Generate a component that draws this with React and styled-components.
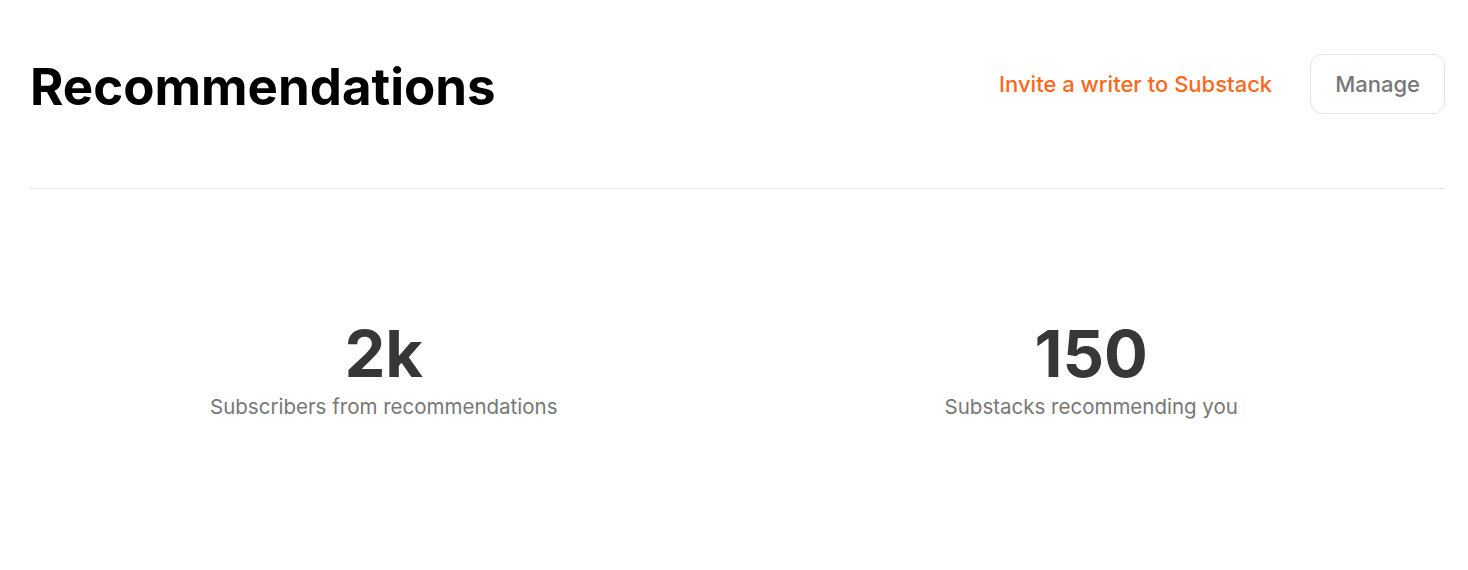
import React from 'react';
import styled, { createGlobalStyle } from 'styled-components';

const GlobalStyle = createGlobalStyle`
    body {
        margin: 0;
        background: #ffffff;
        font-family: Inter, "Noto Sans", sans-serif;
        -webkit-font-smoothing: antialiased;
    }
`;

const Page = styled.div`
    display: flex;
    flex-direction: column;
    padding: 0 23px 0 30px;
`;

const Header = styled.div`
    display: flex;
    flex-direction: row;
    align-items: center;
    justify-content: space-between;
    height: 167px;
    padding-bottom: 21px;
    border-bottom: 1px solid #e6e6e6;
`;

const Title = styled.h1`
    margin: 0;
    padding-top: 5px;
    font-size: 51px;
    font-weight: 700;
    color: #000000;
`;

const Actions = styled.div`
    display: flex;
    align-items: center;
    gap: 38px;
`;

const InviteLink = styled.a`
    font-size: 22px;
    font-weight: 500;
    color: #ff6719;
    cursor: pointer;
`;

const ManageButton = styled.button`
    height: 60px;
    padding: 0 24px;
    font-family: inherit;
    font-size: 22px;
    font-weight: 500;
    color: #777777;
    background: #ffffff;
    border: 1px solid #e3e3e3;
    border-radius: 12px;
`;

const Stats = styled.div`
    display: grid;
    grid-template-columns: 1fr 1fr;
    padding-top: 125px;
`;

const Stat = styled.div`
    display: flex;
    flex-direction: column;
    align-items: center;
`;

const StatValue = styled.div`
    font-size: 65px;
    font-weight: 700;
    line-height: 80px;
    color: #363737;
`;

const StatLabel = styled.div`
    font-size: 20.5px;
    color: #777777;
`;

const stats = [
    { value: '2k', label: 'Subscribers from recommendations' },
    { value: '150', label: 'Substacks recommending you' },
];

const App = () => {
    return (
        <>
            <GlobalStyle />
            <Page>
                <Header>
                    <Title>Recommendations</Title>
                    <Actions>
                        <InviteLink>Invite a writer to Substack</InviteLink>
                        <ManageButton>Manage</ManageButton>
                    </Actions>
                </Header>
                <Stats>
                    {stats.map((s) => (
                        <Stat key={s.label}>
                            <StatValue>{s.value}</StatValue>
                            <StatLabel>{s.label}</StatLabel>
                        </Stat>
                    ))}
                </Stats>
            </Page>
        </>
    );
};

export default App;
